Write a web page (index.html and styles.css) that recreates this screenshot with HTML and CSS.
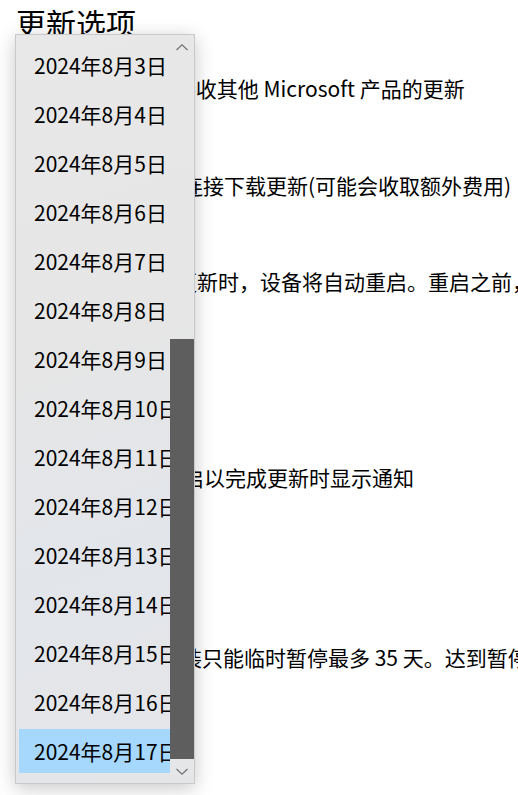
FILE: index.html
```html
<!DOCTYPE html>
<html lang="zh-CN">
<head>
<meta charset="utf-8">
<title>更新选项</title>
<link rel="stylesheet" href="styles.css">
</head>
<body>
<main class="page">
  <h1 class="title">更新选项</h1>
  <div class="settings">
    <p class="line l1">更新 Windows 时接收其他 Microsoft 产品的更新</p>
    <p class="line l2">通过按流量计费的连接下载更新(可能会收取额外费用)</p>
    <p class="line l3">需要重启才能安装更新时，设备将自动重启。重启之前，此设备会显示通知</p>
    <p class="line l4">当你的设备需要重启以完成更新时显示通知</p>
    <p class="line l5">此设备上的更新安装只能临时暂停最多 35 天。达到暂停限制后，必须先获取最新更新</p>
  </div>
</main>

<div class="popup" role="listbox">
  <ul class="list">
    <li class="item">2024年8月3日</li>
    <li class="item">2024年8月4日</li>
    <li class="item">2024年8月5日</li>
    <li class="item">2024年8月6日</li>
    <li class="item">2024年8月7日</li>
    <li class="item">2024年8月8日</li>
    <li class="item">2024年8月9日</li>
    <li class="item">2024年8月10日</li>
    <li class="item">2024年8月11日</li>
    <li class="item">2024年8月12日</li>
    <li class="item">2024年8月13日</li>
    <li class="item">2024年8月14日</li>
    <li class="item">2024年8月15日</li>
    <li class="item">2024年8月16日</li>
    <li class="item selected">2024年8月17日</li>
  </ul>
  <div class="scrollbar">
    <div class="sb-btn">
      <svg width="12" height="7" viewBox="0 0 12 7"><path d="M0.5 6 L6 0.8 L11.5 6" fill="none" stroke="#6e6e6e" stroke-width="1.1"/></svg>
    </div>
    <div class="sb-space"></div>
    <div class="sb-thumb"></div>
    <div class="sb-btn">
      <svg width="12" height="7" viewBox="0 0 12 7"><path d="M0.5 1 L6 6.2 L11.5 1" fill="none" stroke="#6e6e6e" stroke-width="1.1"/></svg>
    </div>
  </div>
</div>
</body>
</html>
```

FILE: styles.css
```css
html, body {
  margin: 0;
  padding: 0;
  background: #ffffff;
  overflow: hidden;
}

body {
  width: 518px;
  height: 795px;
  position: relative;
  font-family: "Noto Sans CJK SC", "Noto Sans", sans-serif;
  color: #000;
}

.page {
  padding-left: 16px;
}

.title {
  margin: 2px 0 0;
  font-size: 30px;
  line-height: 40px;
  font-weight: 400;
}

.settings {
  overflow: hidden;
}

.line {
  margin: 0;
  font-size: 21px;
  line-height: 28px;
  white-space: nowrap;
}

.l1 { margin-top: 32px; text-indent: -3px; }
.l2 { margin-top: 69px; text-indent: -2px; }
.l3 { margin-top: 68px; text-indent: -8px; }
.l4 { margin-top: 168px; text-indent: -1px; }
.l5 { margin-top: 152px; text-indent: -3px; }

.popup {
  position: absolute;
  left: 15px;
  top: 34px;
  width: 178px;
  height: 748px;
  border: 1px solid #c9c9c9;
  background: linear-gradient(160deg, #e8e8e8 0%, #e6e6e6 40%, #e2e5ea 68%, #e5e6e8 100%);
  box-shadow: 0 4px 18px rgba(0, 0, 0, 0.22);
  display: flex;
}

.list {
  list-style: none;
  margin: 0;
  padding: 8px 0 0 3px;
  flex: 1;
  min-width: 0;
  overflow: hidden;
  display: flex;
  flex-direction: column;
  gap: 5px;
}

.item {
  height: 44px;
  line-height: 44px;
  padding-left: 15px;
  font-size: 21px;
  white-space: nowrap;
  overflow: hidden;
  flex-shrink: 0;
}

.item.selected {
  background: #a6d7fd;
}

.scrollbar {
  width: 24px;
  display: flex;
  flex-direction: column;
}

.sb-btn {
  height: 24px;
  display: flex;
  align-items: center;
  justify-content: center;
}

.sb-space {
  height: 280px;
}

.sb-thumb {
  height: 420px;
  background: #5e5e5e;
}
```
